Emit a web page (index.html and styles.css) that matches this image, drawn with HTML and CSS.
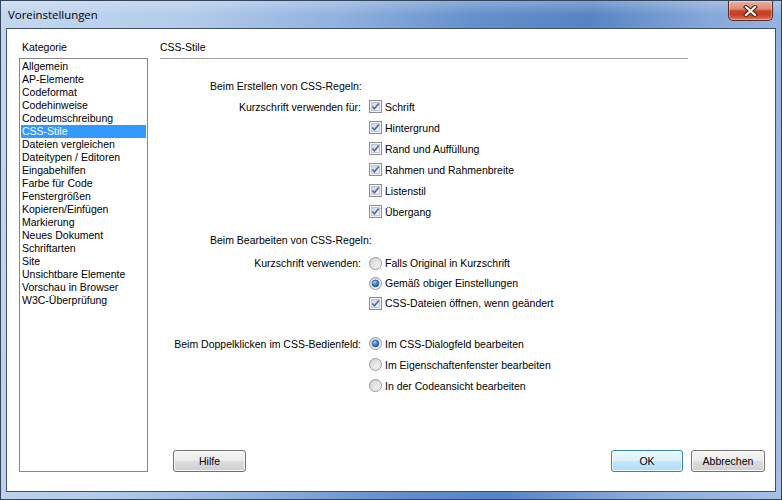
FILE: index.html
```html
<!DOCTYPE html>
<html lang="de">
<head>
<meta charset="utf-8">
<title>Voreinstellungen</title>
<link rel="stylesheet" href="styles.css">
</head>
<body>
<svg class="defs" width="0" height="0" aria-hidden="true">
  <defs>
    <linearGradient id="cbg" x1="0" y1="0" x2="1" y2="1">
      <stop offset="0" stop-color="#cdd1d7"/>
      <stop offset="1" stop-color="#f7f7f7"/>
    </linearGradient>
    <linearGradient id="rbg" x1="0" y1="0" x2="1" y2="1">
      <stop offset="0" stop-color="#d0d0d0"/>
      <stop offset="0.6" stop-color="#ececec"/>
      <stop offset="1" stop-color="#ffffff"/>
    </linearGradient>
    <radialGradient id="rdot" cx="0.35" cy="0.3" r="0.8">
      <stop offset="0" stop-color="#a6dcfb"/>
      <stop offset="0.45" stop-color="#3d8ed8"/>
      <stop offset="1" stop-color="#164e9a"/>
    </radialGradient>
    <symbol id="chk" viewBox="0 0 13 13">
      <rect x="0.5" y="0.5" width="12" height="12" fill="#f4f4f4" stroke="#8e8f8f"/>
      <rect x="2.5" y="2.5" width="8" height="8" fill="url(#cbg)" stroke="#c4c8ce"/>
      <path d="M3.4 6.4 L5.4 8.7 L9.8 3.5" fill="none" stroke="#4a68b3" stroke-width="1.6"/>
    </symbol>
    <symbol id="rad" viewBox="0 0 13 13">
      <circle cx="6.5" cy="6.5" r="6" fill="url(#rbg)" stroke="#979797"/>
      <circle cx="6.5" cy="6.5" r="4.3" fill="none" stroke="#dcdcdc" stroke-width="0.8"/>
    </symbol>
    <symbol id="radon" viewBox="0 0 13 13">
      <circle cx="6.5" cy="6.5" r="6" fill="url(#rbg)" stroke="#979797"/>
      <circle cx="6.5" cy="6.5" r="3.4" fill="url(#rdot)" stroke="#1f4f8f" stroke-width="0.7"/>
    </symbol>
  </defs>
</svg>

<div class="window">
  <div class="titlebar">
    <span class="title">Voreinstellungen</span>
    <div class="close">
      <svg width="15" height="12" viewBox="0 0 15 12">
        <path d="M3 2 L12 10 M12 2 L3 10" stroke="#4a1f1a" stroke-width="4.2" stroke-linecap="square"/>
        <path d="M3 2 L12 10 M12 2 L3 10" stroke="#ffffff" stroke-width="2.2" stroke-linecap="square"/>
      </svg>
    </div>
  </div>

  <div class="client">
    <div class="sidebar">
      <div class="label">Kategorie</div>
      <ul class="list">
        <li>Allgemein</li>
        <li>AP-Elemente</li>
        <li>Codeformat</li>
        <li>Codehinweise</li>
        <li>Codeumschreibung</li>
        <li class="sel">CSS-Stile</li>
        <li>Dateien vergleichen</li>
        <li>Dateitypen / Editoren</li>
        <li>Eingabehilfen</li>
        <li>Farbe für Code</li>
        <li>Fenstergrößen</li>
        <li>Kopieren/Einfügen</li>
        <li>Markierung</li>
        <li>Neues Dokument</li>
        <li>Schriftarten</li>
        <li>Site</li>
        <li>Unsichtbare Elemente</li>
        <li>Vorschau in Browser</li>
        <li>W3C-Überprüfung</li>
      </ul>
    </div>

    <div class="main">
      <div class="header">CSS-Stile</div>

      <div class="form">
        <div class="row heading h1">Beim Erstellen von CSS-Regeln:</div>
        <div class="row">
          <div class="lbl">Kurzschrift verwenden für:</div>
          <div class="ctrl"><svg class="box" width="13" height="13"><use href="#chk"/></svg>Schrift</div>
        </div>
        <div class="row">
          <div class="lbl"></div>
          <div class="ctrl"><svg class="box" width="13" height="13"><use href="#chk"/></svg>Hintergrund</div>
        </div>
        <div class="row">
          <div class="lbl"></div>
          <div class="ctrl"><svg class="box" width="13" height="13"><use href="#chk"/></svg>Rand und Auffüllung</div>
        </div>
        <div class="row">
          <div class="lbl"></div>
          <div class="ctrl"><svg class="box" width="13" height="13"><use href="#chk"/></svg>Rahmen und Rahmenbreite</div>
        </div>
        <div class="row">
          <div class="lbl"></div>
          <div class="ctrl"><svg class="box" width="13" height="13"><use href="#chk"/></svg>Listenstil</div>
        </div>
        <div class="row">
          <div class="lbl"></div>
          <div class="ctrl"><svg class="box" width="13" height="13"><use href="#chk"/></svg>Übergang</div>
        </div>

        <div class="row heading h2">Beim Bearbeiten von CSS-Regeln:</div>
        <div class="row r20 first2">
          <div class="lbl">Kurzschrift verwenden:</div>
          <div class="ctrl"><svg class="box" width="13" height="13"><use href="#rad"/></svg>Falls Original in Kurzschrift</div>
        </div>
        <div class="row r20">
          <div class="lbl"></div>
          <div class="ctrl"><svg class="box" width="13" height="13"><use href="#radon"/></svg>Gemäß obiger Einstellungen</div>
        </div>
        <div class="row r20">
          <div class="lbl"></div>
          <div class="ctrl"><svg class="box" width="13" height="13"><use href="#chk"/></svg>CSS-Dateien öffnen, wenn geändert</div>
        </div>

        <div class="row first3">
          <div class="lbl">Beim Doppelklicken im CSS-Bedienfeld:</div>
          <div class="ctrl"><svg class="box" width="13" height="13"><use href="#radon"/></svg>Im CSS-Dialogfeld bearbeiten</div>
        </div>
        <div class="row">
          <div class="lbl"></div>
          <div class="ctrl"><svg class="box" width="13" height="13"><use href="#rad"/></svg>Im Eigenschaftenfenster bearbeiten</div>
        </div>
        <div class="row">
          <div class="lbl"></div>
          <div class="ctrl"><svg class="box" width="13" height="13"><use href="#rad"/></svg>In der Codeansicht bearbeiten</div>
        </div>
      </div>

      <div class="buttons">
        <button class="btn help">Hilfe</button>
        <div class="spacer"></div>
        <button class="btn ok">OK</button>
        <button class="btn cancel">Abbrechen</button>
      </div>
    </div>
  </div>
</div>
</body>
</html>
```
FILE: styles.css
```css
* { box-sizing: border-box; }

html, body {
  margin: 0;
  padding: 0;
  width: 782px;
  height: 500px;
  overflow: hidden;
  background: #ffffff;
}

body {
  font-family: "Liberation Sans", Arial, sans-serif;
  font-size: 10.5px;
  color: #000;
}

.defs {
  position: absolute;
  width: 0;
  height: 0;
  overflow: hidden;
}

.window {
  width: 782px;
  height: 500px;
  border: 1px solid #34465e;
  padding: 0 5px 7px 5px;
  display: flex;
  flex-direction: column;
  background:
    linear-gradient(180deg, rgba(255,255,255,0.25) 0px, rgba(255,255,255,0) 14px),
    linear-gradient(100deg, #c3d7ef 0%, #b3cbea 22%, #8fb0de 40%, #6490cc 55%, #5684c3 68%, #86a8da 82%, #a6c0e5 100%);
}

.titlebar {
  height: 27px;
  display: flex;
  align-items: flex-start;
  flex: none;
}

.title {
  font-family: "Open Sans", "Liberation Sans", sans-serif;
  font-size: 11.4px;
  color: #000;
  margin-left: 2px;
  margin-top: 6px;
  line-height: 16px;
}

.close {
  margin-left: auto;
  margin-right: 3px;
  width: 45px;
  height: 20px;
  border: 1px solid #5a2a24;
  border-top: none;
  border-radius: 0 0 5px 5px;
  background: linear-gradient(180deg, #eab2a2 0%, #dc8a76 42%, #c8442a 52%, #c63d22 72%, #db7a5c 100%);
  display: flex;
  align-items: center;
  justify-content: center;
  box-shadow: inset 0 0 0 1px rgba(255,255,255,0.35);
}

.client {
  flex: 1;
  background: #ffffff;
  border: 1px solid #3f5068;
  display: flex;
  padding: 12px 10px 19px 12px;
  gap: 12px;
}

.sidebar {
  width: 129px;
  display: flex;
  flex-direction: column;
}

.label {
  height: 17px;
  line-height: 13px;
  padding-left: 3px;
}

.list {
  flex: 1;
  margin: 0;
  padding: 1px;
  list-style: none;
  border: 1px solid #828790;
}

.list li {
  height: 13px;
  line-height: 13px;
  padding-left: 1px;
  white-space: nowrap;
}

.list li.sel {
  background: #3399ff;
  color: #ffffff;
}

.main {
  flex: 1;
  display: flex;
  flex-direction: column;
}

.header {
  width: 528px;
  height: 18px;
  line-height: 13px;
  border-bottom: 1px solid #a0a0a0;
}

.form {
  margin-top: 17px;
  display: flex;
  flex-direction: column;
}

.row {
  height: 21px;
  display: flex;
  align-items: center;
  white-space: nowrap;
}

.row.r20 { height: 20px; }

.heading { padding-left: 50px; }
.h1 { height: 20px; }
.h2 { margin-top: 7px; }
.first2 { margin-top: 3px; }
.first3 { margin-top: 20px; }

.lbl {
  width: 202px;
  text-align: right;
  padding-right: 1px;
}

.ctrl {
  margin-left: 6px;
  display: flex;
  align-items: center;
}

.box {
  flex: none;
  margin-left: 1px;
  margin-right: 3px;
}

.buttons {
  margin-top: auto;
  display: flex;
  align-items: flex-end;
}

.spacer { flex: 1; }

.btn {
  height: 22px;
  font-family: "Liberation Sans", Arial, sans-serif;
  font-size: 10.5px;
  color: #000;
  border: 1px solid #707070;
  border-radius: 3px;
  padding: 0;
  background: linear-gradient(180deg, #f4f4f4 0%, #ececec 48%, #dddddd 52%, #cfcfcf 100%);
  box-shadow: inset 0 0 0 1px rgba(255,255,255,0.8);
}

.help { width: 73px; margin-left: 13px; }
.ok {
  width: 72px;
  border-color: #3c7fb1;
  background: linear-gradient(180deg, #ecf7fd 0%, #ddf1fc 48%, #c4e7fb 52%, #acdcf6 100%);
}
.cancel { width: 74px; margin-left: 8px; }
```
